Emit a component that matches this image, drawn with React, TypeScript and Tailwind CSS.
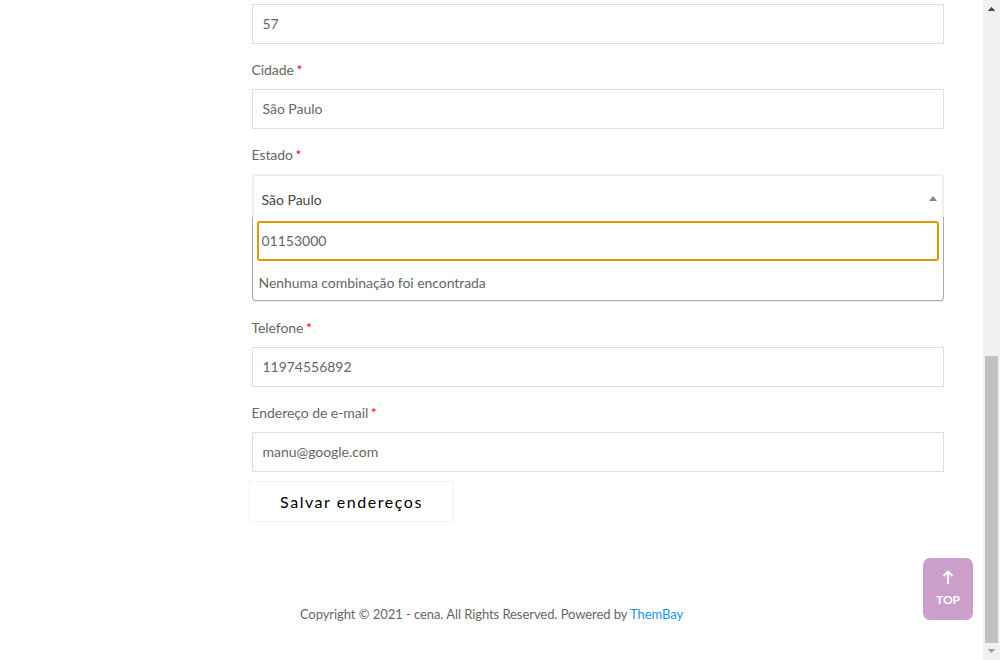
import React from "react";

function Label({ children }: { children: React.ReactNode }) {
  return (
    <label className="-ml-[0.5px] block h-[45px] pt-[14px] text-[14px] leading-6 tracking-[-0.06px] text-[#666]">
      {children} <span className="-ml-px text-[#ff0000]">*</span>
    </label>
  );
}

function Field({ value }: { value: string }) {
  return (
    <input
      className="block h-10 w-full border border-[#dedede] bg-white px-[9.5px] pb-[2px] text-[14px] tracking-[-0.03px] text-[#666] outline-none"
      defaultValue={value}
    />
  );
}

function StateSelect() {
  return (
    <div className="h-32">
      <div className="flex h-[43px] items-center justify-between rounded-t-[4px] border-x-2 border-t-2 border-[#eee] pt-[5px] pr-[5px] pl-[7.5px] text-[14px] text-[#444]">
        <span>São Paulo</span>
        <span className="mb-px h-0 w-0 border-x-4 border-b-[5px] border-x-transparent border-b-[#888]" />
      </div>
      <div className="h-[84px] rounded-b-[4px] border-x border-b border-[#aaa] px-1 pt-1 shadow-[0_1px_0_#eee]">
        <input
          className="block h-10 w-full rounded-[3px] border-2 border-[#e59700] px-[2.5px] pb-[2px] text-[14px] text-[#666] outline-none"
          defaultValue="01153000"
        />
        <p className="px-[1.5px] pt-[10px] text-[14px] leading-6 tracking-[-0.06px] text-[#666]">
          Nenhuma combinação foi encontrada
        </p>
      </div>
    </div>
  );
}

export default function App() {
  return (
    <div className="relative flex h-[660px] w-[1000px] overflow-hidden bg-white font-['Lato',sans-serif]">
      <main className="w-[983px]">
        <form className="ml-[252px] w-[692px] pt-1">
          <Field value="57" />
          <Label>Cidade</Label>
          <Field value="São Paulo" />
          <Label>Estado</Label>
          <StateSelect />
          <Label>Telefone</Label>
          <Field value="11974556892" />
          <Label>Endereço de e-mail</Label>
          <Field value="manu@google.com" />
          <button
            type="button"
            className="mt-[9px] -ml-[3px] block h-[41px] w-[205px] border border-[#f2f2f2] text-[16px] tracking-[1.55px] text-black"
          >
            Salvar endereços
          </button>
        </form>
        <footer className="mt-20 text-center text-[13px] leading-6 tracking-[-0.065px] text-[#666]">
          Copyright © 2021 - cena. All Rights Reserved. Powered by <a className="text-[#1492ff]">ThemBay</a>
        </footer>
      </main>

      <div className="flex w-[17px] flex-col items-center bg-[#f0f0f0]">
        <svg className="h-[17px] w-[17px] shrink-0" viewBox="0 0 17 17" shapeRendering="crispEdges">
          <path d="M8 7h1v1h1v1h1v1h1v1H5v-1h1V9h1V8h1z" fill="#505050" />
        </svg>
        <div className="mt-[339px] mr-px h-[287px] w-[13px] bg-[#c1c1c1]" />
        <svg className="h-[17px] w-[17px] shrink-0" viewBox="0 0 17 17" shapeRendering="crispEdges">
          <path d="M5 6h7v1h-1v1h-1v1H9v1H8V9H7V8H6V7H5z" fill="#a3a3a3" />
        </svg>
      </div>

      <a className="absolute top-[558px] left-[923px] flex h-[62px] w-[50px] flex-col items-center rounded-[7px] bg-[#cb9fc9] pt-[12px] text-white">
        <svg className="h-[15px] w-3" viewBox="0 0 12 15" fill="none" stroke="currentColor" strokeWidth="1.9">
          <path d="M6 14V1.5M1.500 6 6 1.500 10.500 6" />
        </svg>
        <span className="mt-[6px] text-[12px] leading-[18px] font-bold">TOP</span>
      </a>
    </div>
  );
}
